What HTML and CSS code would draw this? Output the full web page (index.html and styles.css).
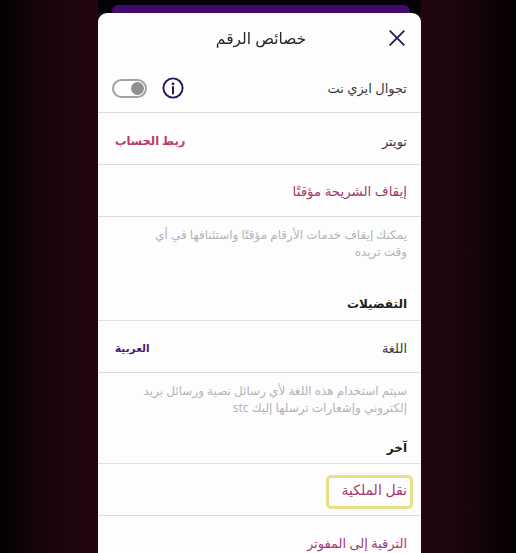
FILE: index.html
```html
<!DOCTYPE html>
<html lang="ar" dir="rtl">
<head>
<meta charset="utf-8">
<title>خصائص الرقم</title>
<link rel="stylesheet" href="styles.css">
</head>
<body>
<div class="stage">
  <div class="backdrop"><div class="backdrop-bar"></div></div>
  <main class="sheet">
    <header class="sheet-head">
      <button class="close" aria-label="إغلاق">
        <svg width="16" height="16" viewBox="0 0 16 16"><path d="M1.2 1.2 L14.8 14.8 M14.8 1.2 L1.2 14.8" stroke="#2f1a5c" stroke-width="1.9" stroke-linecap="round" fill="none"/></svg>
      </button>
      <h1 class="sheet-title">خصائص الرقم</h1>
    </header>
    <div class="row row-first">
      <span class="label">تجوال ايزي نت</span>
      <div class="controls">
        <svg class="info" width="22" height="22" viewBox="0 0 22 22"><circle cx="11" cy="11" r="9.6" stroke="#2b1458" stroke-width="1.9" fill="none"/><circle cx="11" cy="6.8" r="1.4" fill="#2b1458"/><path d="M11 10 V16.5" stroke="#2b1458" stroke-width="2" stroke-linecap="round"/></svg>
        <span class="toggle"><span class="knob"></span></span>
      </div>
    </div>
    <div class="row row-twitter">
      <span class="label">تويتر</span>
      <span class="link-bold">ربط الحساب</span>
    </div>
    <div class="row"><span class="label action action-wide">إيقاف الشريحة مؤقتًا</span></div>
    <p class="note note-a">يمكنك إيقاف خدمات الأرقام مؤقتًا واستئنافها في أي وقت تريده</p>
    <h2 class="section section-a">التفضيلات</h2>
    <div class="row row-low">
      <span class="label">اللغة</span>
      <span class="lang">العربية</span>
    </div>
    <p class="note note-b">سيتم استخدام هذه اللغة لأي رسائل نصية ورسائل بريد إلكتروني وإشعارات ترسلها إليك stc</p>
    <h2 class="section section-b">آخر</h2>
    <div class="row row-low"><span class="label action highlighted">نقل الملكية</span></div>
    <div class="row row-last"><span class="label action">الترقية إلى المفوتر</span></div>
  </main>
</div>
</body>
</html>
```
FILE: styles.css
```css
* { box-sizing: border-box; }
html, body { margin: 0; height: 100%; }
body {
  overflow: hidden;
  background: linear-gradient(90deg, #020001 0%, #12030a 6%, #1c050e 12%, #210610 19%, #210610 81%, #1c050e 88%, #12030a 94%, #020001 100%);
  font-family: "Noto Sans", "DejaVu Sans", sans-serif;
}
.stage { width: 516px; height: 553px; overflow: hidden; display: flex; flex-direction: column; direction: ltr; padding-left: 98px; }
.backdrop { width: 323px; height: 13px; flex: none; background: #050208; padding: 5px 11px 0 14px; }
.backdrop-bar { height: 8px; background: #410b6c; border-radius: 6px 6px 0 0; }
.sheet { width: 323px; flex: none; background: #fdfdfe; border-radius: 9px 9px 0 0; direction: rtl; color: #2a2a2e; filter: blur(0.35px); }
.sheet-head { height: 49px; display: flex; align-items: center; justify-content: center; position: relative; padding-left: 3px; }
.sheet-title { margin: 0; font-size: 15.5px; font-weight: 400; color: #262628; }
.close { position: absolute; left: 291px; top: 17px; padding: 0; width: 16px; height: 16px; border: 0; background: none; display: flex; }
.row { height: 52px; padding: 0 14px 0 17px; display: flex; align-items: center; justify-content: space-between; border-bottom: 1px solid #dcdcdf; }
.row-first { height: 51px; padding-left: 14px; padding-top: 2px; }
.row-twitter { padding-top: 4px; }
.row-low { padding-top: 2px; }
.row-last { border-bottom: 0; padding-top: 1px; }
.label { font-size: 13px; color: #3a3a3d; }
.action { color: #a33a6c; }
.action-wide { font-size: 13.4px; }
.link-bold { font-size: 11.5px; font-weight: 700; color: #c1395f; }
.lang { font-size: 10.5px; font-weight: 700; color: #4a1a6b; }
.controls { display: flex; align-items: center; gap: 15px; }
.info { display: block; }
.toggle { width: 35px; height: 19px; border: 2px solid #a2a2a4; border-radius: 10px; background: #fff; display: flex; align-items: center; justify-content: flex-end; padding: 0 1px; direction: ltr; }
.knob { width: 13px; height: 13px; border-radius: 50%; background: #8f8f91; }
.note { margin: 0; font-size: 12px; line-height: 16.5px; color: #b4b4b8; }
.note-a { padding: 10px 14px 0 40px; height: 70px; }
.note-b { padding: 10px 14px 0; height: 58px; }
.section { margin: 0; padding: 0 14px; font-size: 12px; font-weight: 700; color: #1c1c20; border-bottom: 1px solid #e2e2e5; }
.section-a { height: 34px; line-height: 34px; }
.section-b { height: 33px; line-height: 33px; }
.highlighted { font-size: 14px; line-height: 20px; margin: 2px -3px 0 0; padding: 2px 3px 6px 12px; box-shadow: 0 0 1px 3px #e8de84; border-radius: 2px; }
```
